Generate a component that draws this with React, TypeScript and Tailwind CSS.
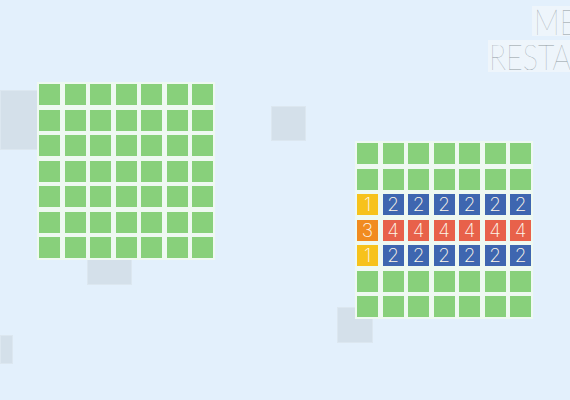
import React from "react"

type Cell = { color: string; label?: string }

const GREEN = "bg-[#88d07b]"

const plainBoard: Cell[][] = Array.from({ length: 7 }, () =>
  Array.from({ length: 7 }, () => ({ color: GREEN }))
)

const mixedBoard: Cell[][] = Array.from({ length: 7 }, (_, r) => {
  if (r === 2 || r === 4) {
    return [
      { color: "bg-[#f7c21b]", label: "1" },
      ...Array.from({ length: 6 }, () => ({ color: "bg-[#3e66b0]", label: "2" })),
    ]
  }
  if (r === 3) {
    return [
      { color: "bg-[#f18b1f]", label: "3" },
      ...Array.from({ length: 6 }, () => ({ color: "bg-[#e8614a]", label: "4" })),
    ]
  }
  return Array.from({ length: 7 }, () => ({ color: GREEN }))
})

function Board({ cells, className }: { cells: Cell[][]; className: string }) {
  return (
    <div className={`absolute grid grid-cols-7 gap-[4.5px] p-[2px] bg-[#eef9f1] ${className}`}>
      {cells.flat().map((cell, i) => (
        <div
          key={i}
          className={`w-[21px] h-[21px] flex items-center justify-center text-[19px] leading-none font-extralight text-[#fdf6e8] ${cell.color}`}
          style={{ fontFamily: "Inter, 'Noto Sans', sans-serif" }}
        >
          {cell.label}
        </div>
      ))}
    </div>
  )
}

function Tile({ className }: { className: string }) {
  return <div className={`absolute bg-[#d4e0ea] border border-[#dce7f0] ${className}`} />
}

export default function App() {
  return (
    <div className="relative w-[570px] h-[400px] overflow-hidden bg-[#e3f0fc]">
      {/* background tiles */}
      <Tile className="left-0 top-[90px] w-[40px] h-[60px]" />
      <Tile className="left-[87px] top-[240px] w-[45px] h-[45px]" />
      <Tile className="left-[271px] top-[106px] w-[35px] h-[35px]" />
      <Tile className="left-0 top-[335px] w-[13px] h-[29px]" />
      <Tile className="left-[337px] top-[307px] w-[36px] h-[36px]" />

      <Board cells={plainBoard} className="left-[37px] top-[82px]" />
      <Board cells={mixedBoard} className="left-[355px] top-[141px]" />

      {/* title */}
      <div
        className="absolute left-[532px] top-[6px] w-[60px] h-[30px] pl-[2px] bg-[#eef5fb] text-[#8f9aa3] text-[36px] leading-[30px] font-thin whitespace-nowrap"
        style={{ fontFamily: "Lato, 'Noto Sans', sans-serif" }}
      >
        <span className="inline-block origin-left scale-x-80">ME</span>
      </div>
      <div
        className="absolute left-[488px] top-[40px] w-[100px] h-[32px] pl-[1px] bg-[#eef5fb] text-[#8f9aa3] text-[36px] leading-[32px] font-thin whitespace-nowrap"
        style={{ fontFamily: "Lato, 'Noto Sans', sans-serif" }}
      >
        <span className="inline-block origin-left scale-x-80">RESTA</span>
      </div>
    </div>
  )
}
